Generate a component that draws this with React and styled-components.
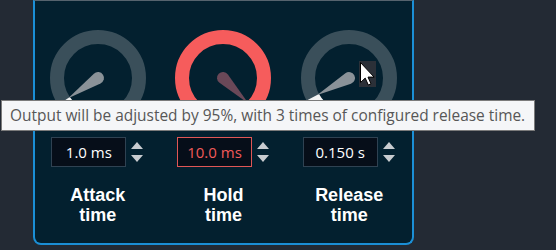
import React from "react";
import styled, { createGlobalStyle } from "styled-components";

const GlobalStyle = createGlobalStyle`
  html, body {
    margin: 0;
    padding: 0;
    background: #232a34;
    font-family: "Open Sans", "Noto Sans", "Liberation Sans", sans-serif;
  }
`;

const Page = styled.div`
  position: relative;
  width: 556px;
  height: 250px;
  overflow: hidden;
  box-sizing: border-box;
  padding-left: 33px;
  background: #232a34;
`;

const Panel = styled.div`
  width: 381px;
  height: 245px;
  box-sizing: border-box;
  border: 2px solid #1b8fd6;
  border-top: 1px solid #56636e;
  border-radius: 0 0 8px 8px;
  background: #03202f;
  display: grid;
  grid-template-columns: repeat(3, 1fr);
  padding-top: 27px;
`;

const Control = styled.div`
  display: flex;
  flex-direction: column;
  align-items: center;
`;

const KnobSvg = styled.svg`
  display: block;
  width: 100px;
  height: 100px;
`;

const InputRow = styled.div`
  display: flex;
  align-items: center;
  gap: 5px;
  margin-top: 9px;
`;

const ValueBox = styled.div`
  width: 75px;
  height: 30px;
  box-sizing: border-box;
  border: 1px solid ${(p) => (p.$error ? "#e05656" : "#2f4252")};
  background: #060e19;
  color: ${(p) => (p.$error ? "#f05a5a" : "#ffffff")};
  font-size: 15px;
  display: flex;
  align-items: center;
  justify-content: center;
`;

const Spinner = styled.div`
  display: flex;
  flex-direction: column;
  gap: 6px;
  width: 13px;
`;

const Arrow = styled.div`
  width: 0;
  height: 0;
  border-left: 6.5px solid transparent;
  border-right: 6.5px solid transparent;
  ${(p) =>
    p.$down
      ? "border-top: 7px solid #c8ccd0;"
      : "border-bottom: 7px solid #c8ccd0;"}
`;

const Label = styled.div`
  margin-top: 18px;
  color: #ffffff;
  font-family: "Liberation Sans", Arial, sans-serif;
  font-weight: bold;
  font-size: 18px;
  line-height: 20px;
  text-align: center;
`;

const Tooltip = styled.div`
  position: absolute;
  left: 1px;
  top: 100px;
  width: 534px;
  height: 31px;
  box-sizing: border-box;
  border: 1px solid #7b7b7b;
  background: #f5f6f8;
  color: #575757;
  font-size: 15.45px;
  line-height: 29px;
  padding-left: 8px;
  white-space: nowrap;
`;

const Cursor = styled.svg`
  position: absolute;
  left: 359px;
  top: 61px;
`;

const polar = (r, a) => {
  const rad = (a * Math.PI) / 180;
  return [50 + r * Math.sin(rad), 50 - r * Math.cos(rad)];
};

const arcPath = (r, a0, a1) => {
  const [x0, y0] = polar(r, a0);
  const [x1, y1] = polar(r, a1);
  const large = a1 - a0 > 180 ? 1 : 0;
  return `M ${x0} ${y0} A ${r} ${r} 0 ${large} 1 ${x1} ${y1}`;
};

const POINTER = "M -5.92 -0.97 L 0 -36 L 5.92 -0.97 A 6 6 0 1 1 -5.92 -0.97 Z";

const Knob = ({ angle, error }) => (
  <KnobSvg viewBox="0 0 100 100">
    <circle cx="50" cy="50" r="41" fill="none" stroke={error ? "#f65c5c" : "#3a4f5a"} strokeWidth="14" />
    {!error && <path d={arcPath(41, -135, angle)} fill="none" stroke="#f2f2f2" strokeWidth="14" />}
    <path d={POINTER} fill={error ? "#6a4858" : "#8a9298"} transform={`translate(50 50) rotate(${angle})`} />
  </KnobSvg>
);

const controls = [
  { name: ["Attack", "time"], value: "1.0 ms", angle: -124 },
  { name: ["Hold", "time"], value: "10.0 ms", angle: 135, error: true },
  { name: ["Release", "time"], value: "0.150 s", angle: -118 },
];

export default function App() {
  return (
    <Page>
      <GlobalStyle />
      <Panel>
        {controls.map((c) => (
          <Control key={c.name[0]}>
            <Knob angle={c.angle} error={c.error} />
            <InputRow>
              <ValueBox $error={c.error}>{c.value}</ValueBox>
              <Spinner>
                <Arrow />
                <Arrow $down />
              </Spinner>
            </InputRow>
            <Label>
              {c.name[0]}
              <br />
              {c.name[1]}
            </Label>
          </Control>
        ))}
      </Panel>
      <Tooltip>Output will be adjusted by 95%, with 3 times of configured release time.</Tooltip>
      <Cursor width="17" height="26" viewBox="0 0 17 26">
        <rect width="17" height="26" fill="#2b3038" />
        <path d="M1.5 1.5 L1.5 21.5 L6.2 17.1 L9.3 24 L12 22.8 L9 16.1 L15.1 16.1 Z" fill="#ffffff" stroke="#000000" strokeWidth="1" />
      </Cursor>
    </Page>
  );
}
